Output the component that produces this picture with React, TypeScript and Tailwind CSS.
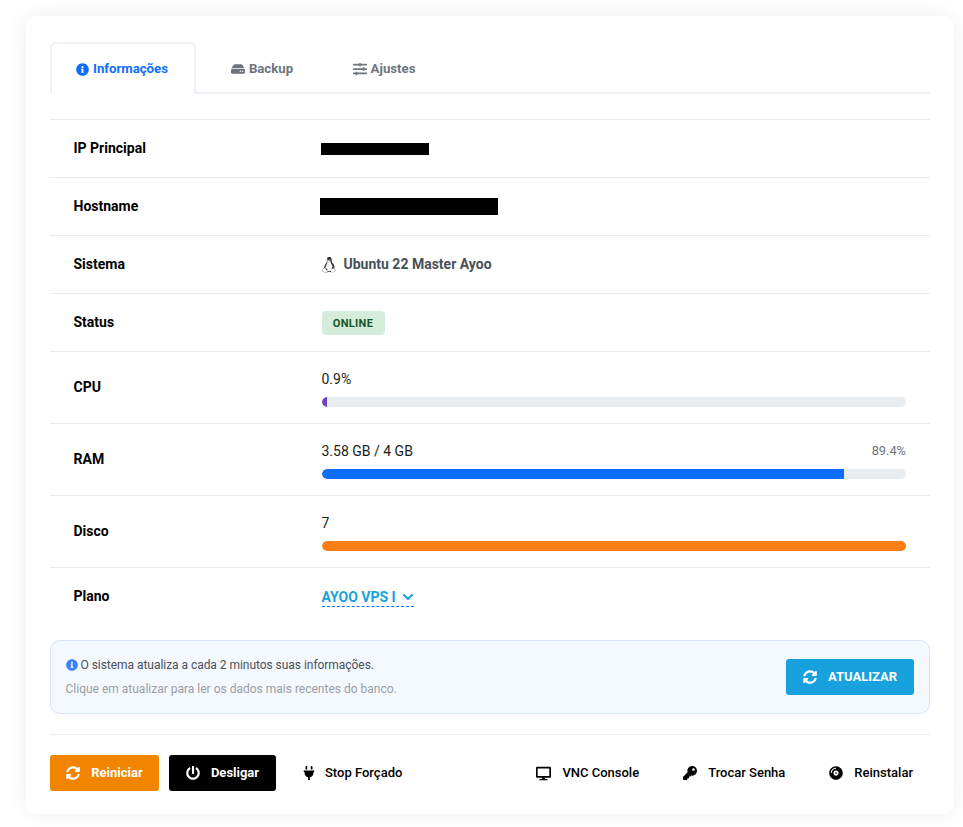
import React from 'react';
import { FaInfoCircle, FaHdd, FaSlidersH, FaLinux, FaSyncAlt, FaPowerOff, FaPlug, FaDesktop, FaKey, FaCompactDisc } from 'react-icons/fa';
import { FiChevronDown } from 'react-icons/fi';

const Row = ({ label, h, children }: { label: string; h: string; children: React.ReactNode }) => (
  <div className={`flex items-center border-t border-[#e9ecef] pl-[23.5px] pr-6 ${h}`}>
    <div className="w-[248px] shrink-0 text-[14px] font-bold text-black">{label}</div>
    <div className="min-w-0 flex-1">{children}</div>
  </div>
);

const Bar = ({ left, right, color, width }: { left: string; right?: string; color: string; width: string }) => (
  <div>
    <div className="mb-[7px] flex h-[21px] items-center justify-between">
      <span className="text-[14px] text-[#1a1d20]">{left}</span>
      {right && <span className="text-[12.8px] text-[#6c757d]">{right}</span>}
    </div>
    <div className="h-[10px] overflow-hidden rounded-[5px] bg-[#e9ecef]">
      <div className={`h-full rounded-l-[5px] ${color}`} style={{ width }} />
    </div>
  </div>
);

const LinkBtn = ({ icon, gap, children }: { icon: React.ReactNode; gap: string; children: React.ReactNode }) => (
  <div className={`flex h-9 items-center text-[13px] font-medium text-black ${gap}`}>
    {icon}
    <span>{children}</span>
  </div>
);

export default function App() {
  return (
    <div className="min-h-screen bg-white pl-[26px] pt-4 font-['Roboto',sans-serif]">
      <div className="h-[798px] w-[928px] rounded-[10px] bg-white px-6 pt-[26px] shadow-[0_0_24px_rgba(0,0,0,0.07)]">
        {/* Tabs */}
        <div className="flex h-[52px] border-b-2 border-[#eff2f7]">
          <div className="-mb-[2px] flex h-[52px] w-[146px] items-center justify-center gap-1 rounded-t-[6px] border-2 border-b-0 border-[#eff2f7] bg-white pr-[2px] text-[13.2px] font-bold text-[#0d6efd]">
            <FaInfoCircle size={13} />
            <span>Informações</span>
          </div>
          <div className="flex w-[132px] items-center justify-center gap-1 pt-1 text-[13.2px] font-bold text-[#6c757d]">
            <FaHdd size={14} />
            <span>Backup</span>
          </div>
          <div className="flex w-[112px] items-center justify-center gap-1 pt-1 text-[13.2px] font-bold text-[#6c757d]">
            <FaSlidersH size={14} />
            <span>Ajustes</span>
          </div>
        </div>

        {/* Dados */}
        <div className="mt-[25px]">
          <Row label="IP Principal" h="h-[58px]">
            <div className="-ml-[0.5px] h-3 w-[108px] bg-black" />
          </Row>
          <Row label="Hostname" h="h-[58px]">
            <div className="-ml-[1.5px] h-[17px] w-[178px] bg-black" />
          </Row>
          <Row label="Sistema" h="h-[58px]">
            <div className="flex items-center gap-[7px] text-[14px] font-bold text-[#495057]">
              <FaLinux size={16} className="-ml-px text-[#212529]" />
              <span>Ubuntu 22 Master Ayoo</span>
            </div>
          </Row>
          <Row label="Status" h="h-[58px]">
            <span className="inline-flex h-6 w-[63px] items-center justify-center rounded-[4px] bg-[#d4edda] pt-px text-[11px] font-bold tracking-[0.3px] text-[#155724]">
              ONLINE
            </span>
          </Row>
          <Row label="CPU" h="h-[72px]">
            <Bar left="0.9%" color="bg-[#6f42c1]" width="0.9%" />
          </Row>
          <Row label="RAM" h="h-[72px]">
            <Bar left="3.58 GB / 4 GB" right="89.4%" color="bg-[#0d6efd]" width="89.4%" />
          </Row>
          <Row label="Disco" h="h-[72px]">
            <Bar left="7" color="bg-[#fd7e14]" width="100%" />
          </Row>
          <Row label="Plano" h="h-[58px]">
            <span className="inline-flex items-center gap-1 border-b border-dashed border-[#0d6efd] text-[14px] font-bold leading-[18px] text-[#17a2dd]">
              AYOO VPS I
              <FiChevronDown size={16} strokeWidth={3} className="-mr-[2px]" />
            </span>
          </Row>
        </div>

        {/* Aviso */}
        <div className="mt-[15px] flex h-[74px] items-center justify-between rounded-[10px] border border-[#d6e4fb] bg-[#f4f8ff] pl-[14.5px] pr-[15px]">
          <div>
            <div className="flex h-6 items-center gap-[3px] text-[12px] tracking-[-0.04px] text-[#495057]">
              <FaInfoCircle size={12} className="text-[#3b82f6]" />
              <span>O sistema atualiza a cada 2 minutos suas informações.</span>
            </div>
            <div className="h-6 text-[12px] leading-6 text-[#9a9fa5]">
              Clique em atualizar para ler os dados mais recentes do banco.
            </div>
          </div>
          <div className="flex h-9 w-[128px] items-center justify-center gap-[11px] rounded-[3px] bg-[#17a2dd] text-[13px] font-bold text-white">
            <FaSyncAlt size={14} />
            <span>ATUALIZAR</span>
          </div>
        </div>

        {/* Acoes */}
        <div className="mt-5 flex items-center border-t border-[#eef0f3] pt-5">
          <div className="flex h-9 w-[109px] items-center justify-center gap-[11px] rounded-[3px] bg-[#f28500] text-[13px] font-bold text-white">
            <FaSyncAlt size={14} />
            <span>Reiniciar</span>
          </div>
          <div className="ml-[10px] flex h-9 w-[107px] items-center justify-center gap-[11px] rounded-[3px] bg-black text-[13px] font-bold text-white">
            <FaPowerOff size={14} />
            <span>Desligar</span>
          </div>
          <div className="ml-[26px]">
            <LinkBtn gap="gap-[9px]" icon={<FaPlug size={14} />}>Stop Forçado</LinkBtn>
          </div>
          <div className="ml-auto flex items-center gap-[44px] pr-[17px]">
            <LinkBtn gap="gap-[11px]" icon={<FaDesktop size={15} />}>VNC Console</LinkBtn>
            <LinkBtn gap="gap-[11px]" icon={<FaKey size={14} />}>Trocar Senha</LinkBtn>
            <LinkBtn gap="gap-[11px]" icon={<FaCompactDisc size={14} />}>Reinstalar</LinkBtn>
          </div>
        </div>
      </div>
    </div>
  );
}
